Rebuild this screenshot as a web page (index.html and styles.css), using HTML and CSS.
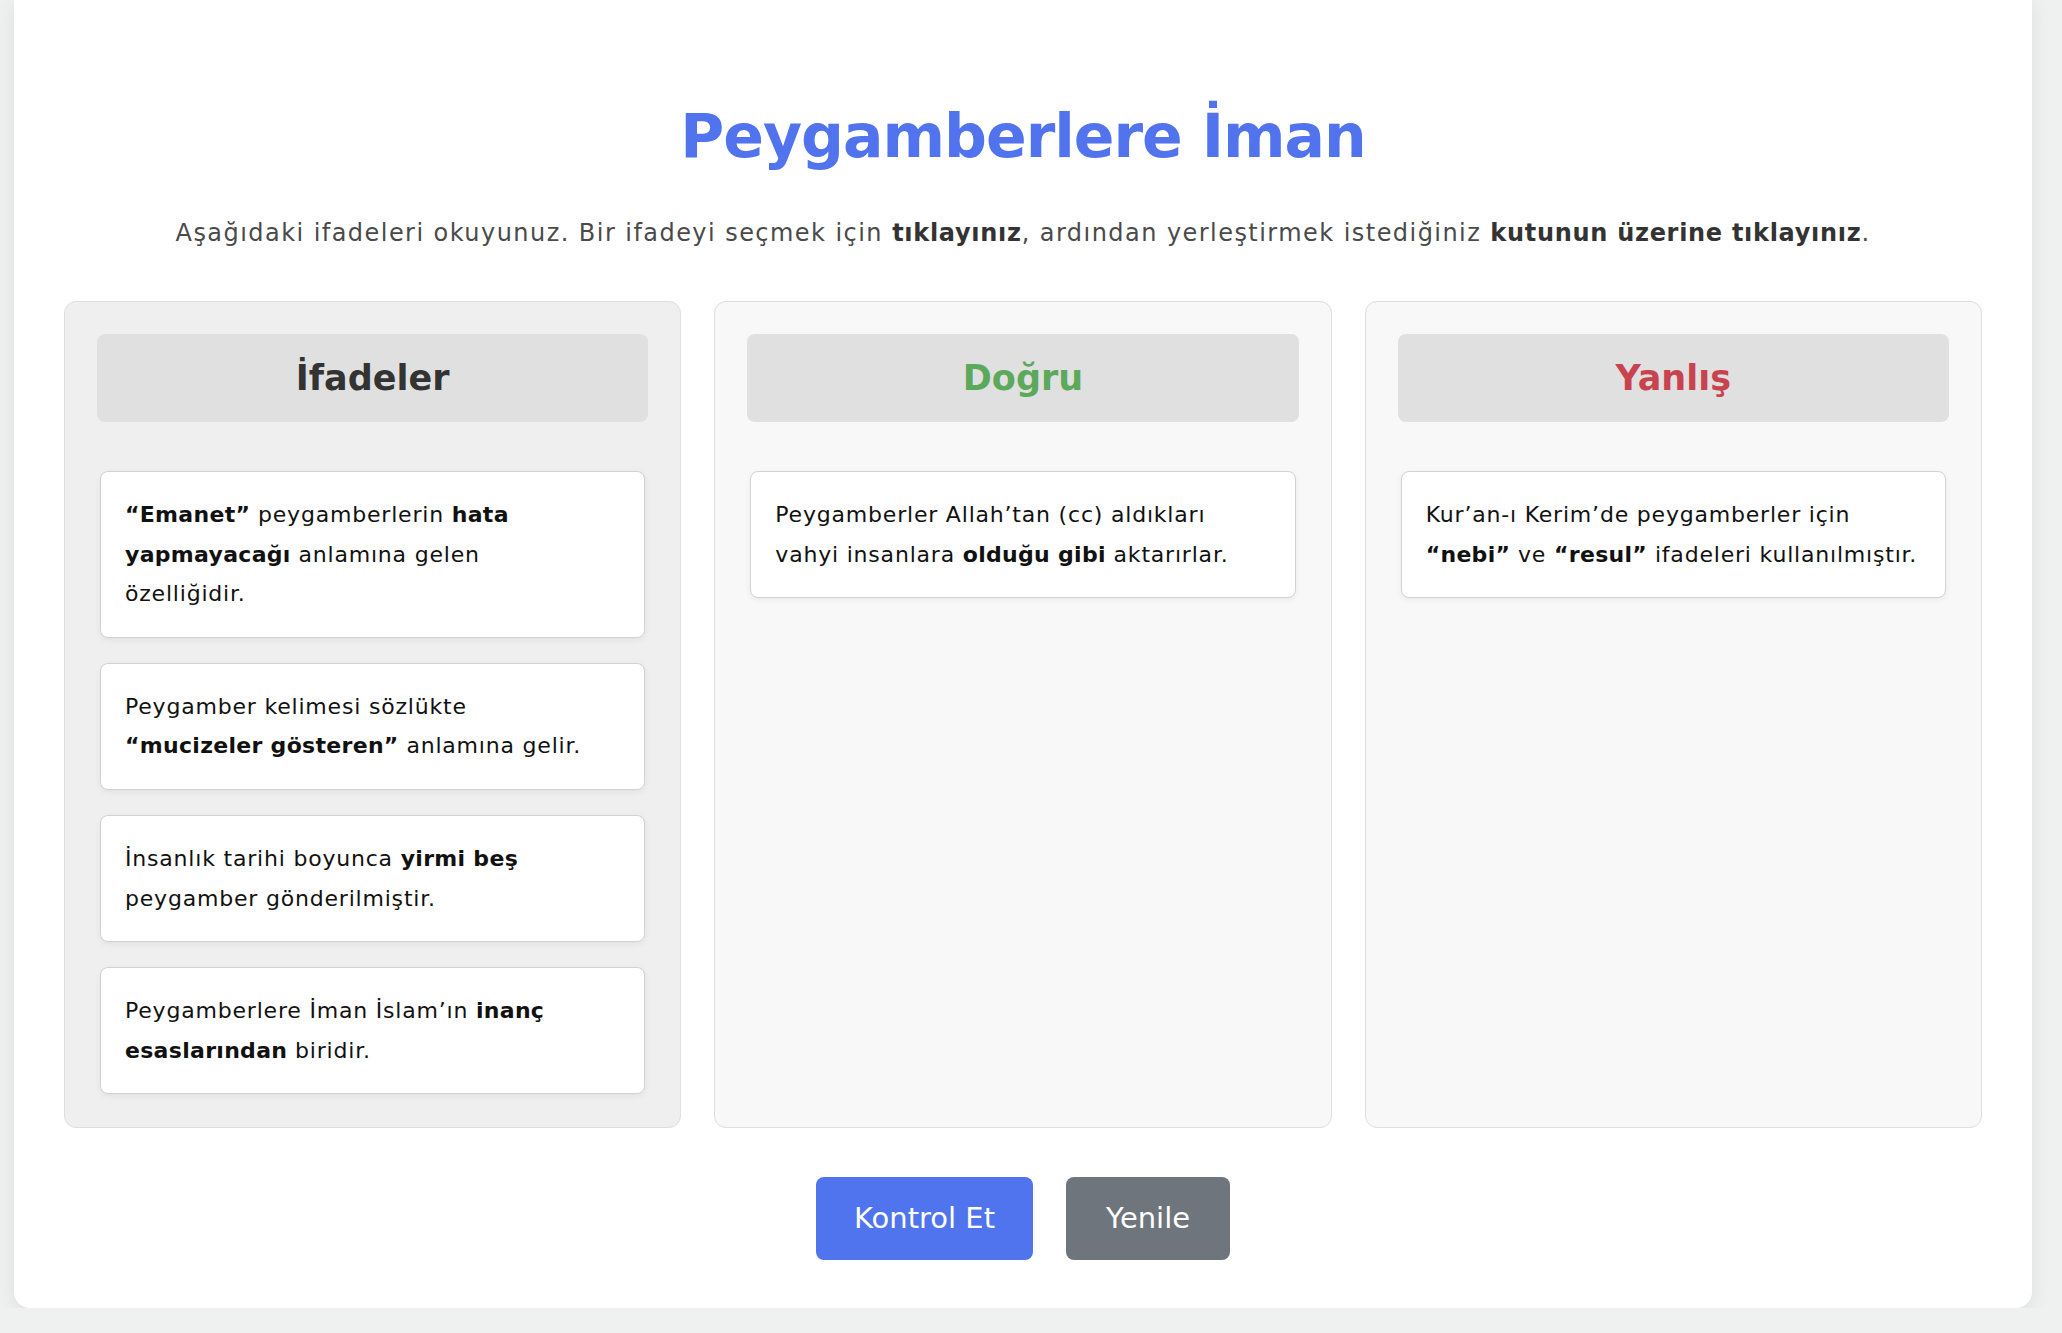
FILE: index.html
```html
<!DOCTYPE html>
<html lang="tr">
<head>
    <meta charset="UTF-8">
    <meta name="viewport" content="width=device-width, initial-scale=1.0">
    <title>Peygamberlere İman</title>
    <link rel="stylesheet" href="styles.css">
</head>
<body>
    <div class="container">
        <h1>Peygamberlere İman</h1>
        <p class="instructions">Aşağıdaki ifadeleri okuyunuz. Bir ifadeyi seçmek için <strong>tıklayınız</strong>, ardından yerleştirmek istediğiniz <strong>kutunun üzerine tıklayınız</strong>.</p>

        <div class="board">
            <div class="column column-source">
                <h2 class="column-title">İfadeler</h2>
                <div class="drop-zone">
                    <div class="statement"><b>“Emanet”</b> peygamberlerin <b>hata yapmayacağı</b> anlamına gelen<br>özelliğidir.</div>
                    <div class="statement">Peygamber kelimesi sözlükte <b class="keep">“mucizeler gösteren”</b> anlamına gelir.</div>
                    <div class="statement">İnsanlık tarihi boyunca <b>yirmi beş</b> peygamber gönderilmiştir.</div>
                    <div class="statement">Peygamberlere İman İslam’ın <b>inanç esaslarından</b> biridir.</div>
                </div>
            </div>

            <div class="column">
                <h2 class="column-title title-true">Doğru</h2>
                <div class="drop-zone">
                    <div class="statement">Peygamberler Allah’tan (cc) aldıkları vahyi insanlara <b>olduğu gibi</b> aktarırlar.</div>
                </div>
            </div>

            <div class="column">
                <h2 class="column-title title-false">Yanlış</h2>
                <div class="drop-zone">
                    <div class="statement">Kur’an-ı Kerim’de peygamberler için <b>“nebi”</b> ve <b>“resul”</b> ifadeleri kullanılmıştır.</div>
                </div>
            </div>
        </div>

        <div class="actions">
            <button class="btn btn-check">Kontrol Et</button>
            <button class="btn btn-reset">Yenile</button>
        </div>
    </div>
</body>
</html>
```

FILE: styles.css
```css
* {
    margin: 0;
    padding: 0;
    box-sizing: border-box;
}

body {
    font-family: 'DejaVu Sans', Inter, sans-serif;
    background: #eff1f1;
    color: #111;
}

.container {
    margin: 0 30px 0 14px;
    padding: 98px 50px 48px;
    background: #fff;
    border-radius: 0 0 16px 16px;
    box-shadow: 0 4px 20px rgba(0, 0, 0, 0.08);
}

h1 {
    text-align: center;
    font-size: 60px;
    line-height: 76px;
    font-weight: 700;
    letter-spacing: -1px;
    color: #5174ee;
    margin-bottom: 41px;
}

.instructions {
    text-align: center;
    font-size: 24px;
    line-height: 36px;
    letter-spacing: 1.45px;
    color: #4a4a4a;
    margin-bottom: 50px;
}

.instructions strong {
    color: #333;
    font-weight: 700;
    letter-spacing: 0.7px;
}

.board {
    display: grid;
    grid-template-columns: repeat(3, 1fr);
    gap: 33px;
}

.column {
    background: #f8f8f8;
    border: 1px solid #dedede;
    border-radius: 12px;
    padding: 32px 32px 30px;
}

.column-source {
    background: #efefef;
}

.column-title {
    background: #e0e0e0;
    border-radius: 8px;
    text-align: center;
    font-size: 35px;
    line-height: 88px;
    font-weight: 700;
    color: #333;
}

.title-true {
    color: #5ca95c;
}

.title-false {
    color: #c9434e;
}

.drop-zone {
    display: flex;
    flex-direction: column;
    gap: 25px;
    margin-top: 46px;
    padding: 3px;
}

.statement {
    background: #fff;
    border: 1px solid #d2d2d2;
    border-radius: 8px;
    padding: 23px 20px 23px 24px;
    font-size: 22px;
    line-height: 39.6px;
    letter-spacing: 0.8px;
    box-shadow: 0 2px 6px rgba(0, 0, 0, 0.06);
    cursor: pointer;
}

.statement b {
    font-weight: 700;
    letter-spacing: 0.3px;
}

.keep {
    white-space: nowrap;
}

.actions {
    display: flex;
    justify-content: center;
    gap: 33px;
    margin-top: 49px;
}

.btn {
    border: none;
    border-radius: 8px;
    padding: 20px 38px;
    font-family: inherit;
    font-size: 29px;
    line-height: 43px;
    color: #fff;
    cursor: pointer;
}

.btn-check {
    background: #5074ed;
}

.btn-reset {
    background: #6f757c;
    padding: 20px 40px;
}
```
